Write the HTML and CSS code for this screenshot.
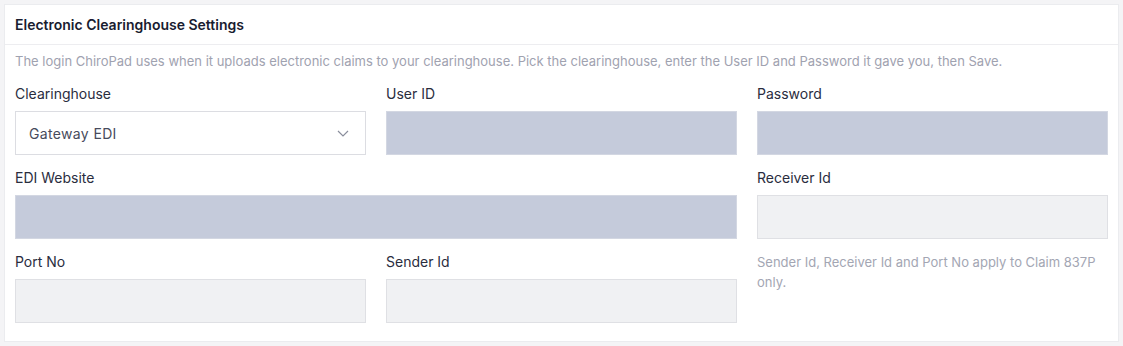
FILE: index.html
```html
<!DOCTYPE html>
<html lang="en">
<head>
<meta charset="utf-8">
<title>Electronic Clearinghouse Settings</title>
<link rel="stylesheet" href="styles.css">
</head>
<body>
<section class="card">
  <header class="card-header">
    <h2 class="card-title">Electronic Clearinghouse Settings</h2>
  </header>
  <div class="card-body">
    <p class="desc">The login ChiroPad uses when it uploads electronic claims to your clearinghouse. Pick the clearinghouse, enter the User ID and Password it gave you, then Save.</p>
    <div class="grid">
      <div class="field">
        <label class="label">Clearinghouse</label>
        <div class="select">
          <span class="select-value">Gateway EDI</span>
          <svg class="chev" width="12" height="7" viewBox="0 0 12 7"><path d="M1 1 L6 6 L11 1" fill="none" stroke="#8a8e9c" stroke-width="1.2"/></svg>
        </div>
      </div>
      <div class="field">
        <label class="label">User ID</label>
        <div class="input filled"></div>
      </div>
      <div class="field">
        <label class="label">Password</label>
        <div class="input filled"></div>
      </div>
      <div class="field span2">
        <label class="label">EDI Website</label>
        <div class="input filled"></div>
      </div>
      <div class="field">
        <label class="label">Receiver Id</label>
        <div class="input disabled"></div>
      </div>
      <div class="field">
        <label class="label">Port No</label>
        <div class="input disabled"></div>
      </div>
      <div class="field">
        <label class="label">Sender Id</label>
        <div class="input disabled"></div>
      </div>
      <p class="note">Sender Id, Receiver Id and Port No apply to Claim 837P only.</p>
    </div>
  </div>
</section>
</body>
</html>
```
FILE: styles.css
```css
* { box-sizing: border-box; }
html, body { margin: 0; padding: 0; }
body {
  background: #f4f4f6;
  padding: 4px;
  font-family: Inter, "Liberation Sans", sans-serif;
  width: 1123px;
  height: 346px;
}
.card {
  background: #fff;
  border: 1px solid #ebecef;
  width: 1115px;
}
.card-header {
  height: 40px;
  border-bottom: 1px solid #ededf0;
  display: flex;
  align-items: center;
  padding: 0 10px;
}
.card-title {
  margin: 0;
  font-size: 14px;
  font-weight: 600;
  color: #191c30;
}
.card-body {
  padding: 7px 10px 18px 10px;
}
.desc {
  margin: 0 0 14px 0;
  font-size: 13px;
  line-height: 18px;
  color: #9fa2b0;
}
.grid {
  display: grid;
  grid-template-columns: repeat(3, 351px);
  column-gap: 20px;
  row-gap: 13px;
}
.field { display: flex; flex-direction: column; }
.span2 { grid-column: span 2; }
.label {
  font-size: 14px;
  line-height: 20px;
  color: #2a2d3e;
  margin-bottom: 7px;
}
.input, .select {
  height: 44px;
  border: 1px solid #dcdde2;
}
.filled { background: #c5cbdb; border-color: #d3d7e2; }
.disabled { background: #f0f1f3; border-color: #dfe0e4; }
.select {
  background: #fff;
  display: flex;
  align-items: center;
  justify-content: space-between;
  padding: 0 16px 0 13px;
}
.select-value { font-size: 14px; letter-spacing: 0.35px; color: #474b5c; }
.note {
  margin: 0;
  font-size: 13px;
  line-height: 20px;
  color: #a3a6b3;
}
```
